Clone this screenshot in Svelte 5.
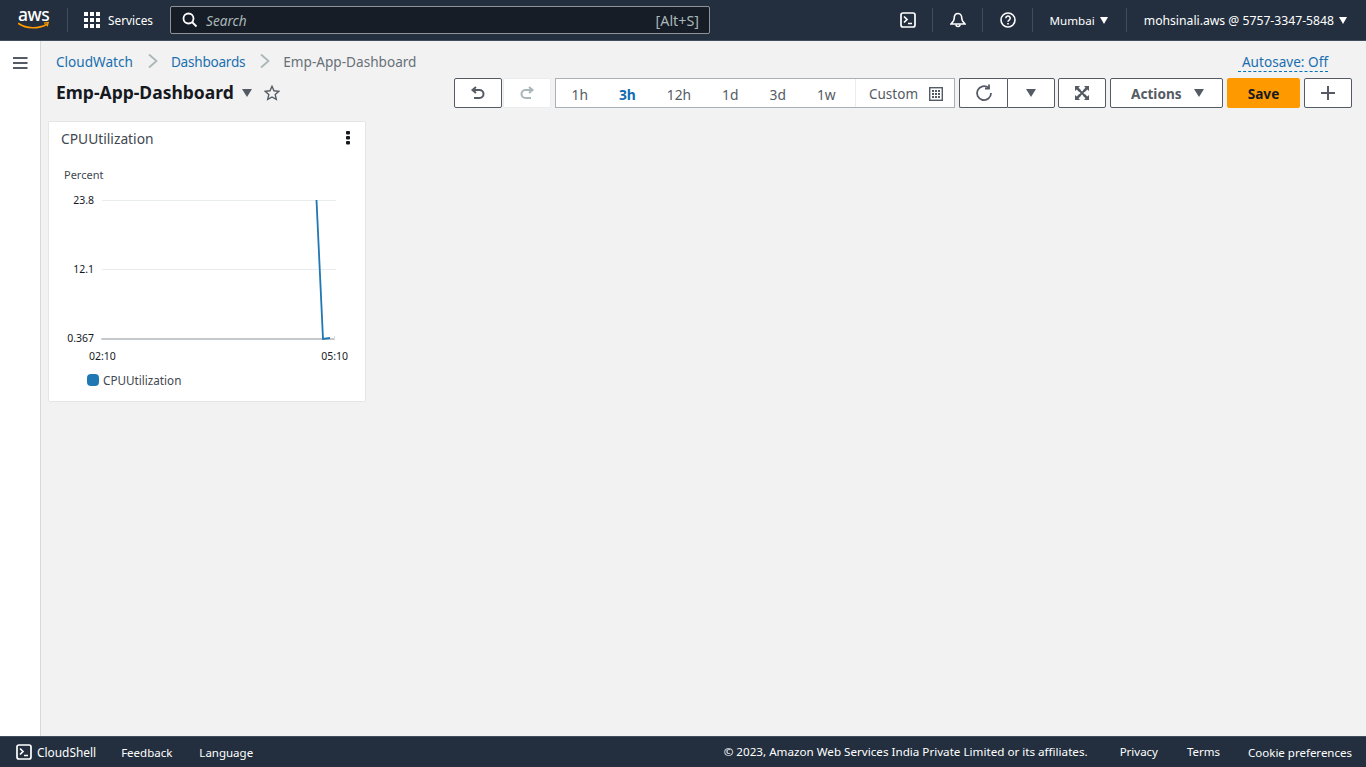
<script>
  const ranges = [['1h',false],['3h',true],['12h',false],['1d',false],['3d',false],['1w',false]];
</script>

<div class="page">
  <header class="top">
    <svg class="logo" viewBox="0 -4 38 30" width="38" height="30">
      <text x="0" y="12" class="logotext">aws</text>
      <path d="M0.500 14.500c8 5.500 20 5.500 28 1" fill="none" stroke="#ff9900" stroke-width="1.600" stroke-linecap="round"/>
      <path d="M26 14.100l4.200 -0.500l-1 3.800" fill="none" stroke="#ff9900" stroke-width="1.300"/>
    </svg>
    <span class="vsep first"></span>
    <svg class="grid" width="16" height="16" viewBox="0 0 16 16" fill="#fff">
      <rect x="0" y="0" width="4" height="4"/><rect x="6" y="0" width="4" height="4"/><rect x="12" y="0" width="4" height="4"/>
      <rect x="0" y="6" width="4" height="4"/><rect x="6" y="6" width="4" height="4"/><rect x="12" y="6" width="4" height="4"/>
      <rect x="0" y="12" width="4" height="4"/><rect x="6" y="12" width="4" height="4"/><rect x="12" y="12" width="4" height="4"/>
    </svg>
    <span class="services">Services</span>
    <div class="search">
      <svg width="16" height="16" viewBox="0 0 16 16" fill="none" stroke="#fff" stroke-width="1.800"><circle cx="6.500" cy="6.500" r="5"/><path d="M10 10L14.500 14.500"/></svg>
      <span class="placeholder">Search</span>
      <span class="hint">[Alt+S]</span>
    </div>
    <div class="right">
      <svg class="ico" width="16" height="16" viewBox="0 0 16 16" fill="none" stroke="#fff" stroke-width="1.700"><rect x="1" y="1" width="14" height="14" rx="2"/><path d="M4 4.500L7 7.500L4 10.500M8 11.500h4"/></svg>
      <span class="vsep s1"></span>
      <svg class="ico" width="16" height="16" viewBox="0 0 16 16" fill="none" stroke="#fff" stroke-width="1.600"><path d="M8 1.500c-2.800 0-3.800 2.500-3.800 5c0 2.500-1.700 3.800-3.200 5.500h14c-1.500-1.700-3.200-3-3.200-5.500c0-2.500-1-5-3.800-5z"/><path d="M6 12.500a2 2 0 0 0 4 0"/></svg>
      <span class="vsep s1"></span>
      <svg class="ico" width="16" height="16" viewBox="0 0 16 16" fill="none" stroke="#fff" stroke-width="1.600"><circle cx="8" cy="8" r="7"/><path d="M5.800 6.200a2.200 2.200 0 1 1 3.300 1.900c-.7.400-1.100.8-1.100 1.700"/><path d="M8 11v1.500"/></svg>
      <span class="vsep s1"></span>
      <span class="region">Mumbai</span><span class="caret"></span>
      <span class="vsep s2"></span>
      <span class="account">mohsinali.aws @ 5757-3347-5848</span><span class="caret"></span>
    </div>
  </header>

  <div class="body">
    <aside class="side">
      <svg width="16" height="14" viewBox="0 0 16 14" fill="#545b64"><rect y="1" width="14.500" height="2"/><rect y="6" width="14.500" height="2"/><rect y="11" width="14.500" height="2"/></svg>
    </aside>
    <main class="main">
      <div class="crumbrow">
        <nav class="crumbs">
          <a href="#a">CloudWatch</a>
          <svg width="12" height="16" viewBox="0 0 12 16" fill="none" stroke="#aab7b8" stroke-width="1.800"><path d="M2 1.500L9.500 8L2 14.500"/></svg>
          <a class="dash" href="#b">Dashboards</a>
          <svg width="12" height="16" viewBox="0 0 12 16" fill="none" stroke="#aab7b8" stroke-width="1.800"><path d="M2 1.500L9.500 8L2 14.500"/></svg>
          <span class="cur">Emp-App-Dashboard</span>
        </nav>
        <span class="autosave">Autosave: Off</span>
      </div>
      <div class="titlerow">
        <h1>Emp-App-Dashboard</h1>
        <span class="tcaret"></span>
        <svg class="star" width="16" height="16" viewBox="0 0 16 16" fill="none" stroke="#545b64" stroke-width="1.400"><path d="M8 1.300l2 4.500 4.900.5-3.700 3.300 1.100 4.800L8 12l-4.300 2.400 1.100-4.800L1.100 6.300 6 5.800z"/></svg>
        <div class="tools">
          <button class="btn w48">
            <svg width="16" height="16" viewBox="0 0 16 16" fill="none" stroke="#545b64" stroke-width="2"><path d="M6 2L2.500 5L6 8"/><path d="M3 5h6.500a3.500 3.500 0 0 1 0 8H4"/></svg>
          </button>
          <button class="btn w48 off">
            <svg width="16" height="16" viewBox="0 0 16 16" fill="none" stroke="#aab7b8" stroke-width="2"><path d="M10 2l3.500 3L10 8"/><path d="M13 5H6.500a3.500 3.500 0 0 0 0 8H12"/></svg>
          </button>
          <div class="ranges">
            {#each ranges as [label, active]}
              <span class="range" class:active>{label}</span>
            {/each}
            <span class="custom">Custom
              <svg width="14" height="14" viewBox="0 0 14 14"><rect x=".7" y=".7" width="12.600" height="12.600" fill="none" stroke="#545b64" stroke-width="1.400"/><path d="M3 3h2v2H3zM6 3h2v2H6zM9 3h2v2H9zM3 6h2v2H3zM6 6h2v2H6zM9 6h2v2H9zM3 9h2v2H3zM6 9h2v2H6zM9 9h2v2H9z" fill="#545b64"/></svg>
            </span>
          </div>
          <div class="joined">
            <button class="btn w48 jl">
              <svg width="18" height="18" viewBox="0 0 18 18" fill="none" stroke="#545b64" stroke-width="1.800"><path d="M13.500 3.800A7 7 0 1 0 16 9"/><path d="M14 0.500V4.500H10" /></svg>
            </button>
            <button class="btn w48 jr"><span class="bcaret"></span></button>
          </div>
          <button class="btn w48 expand">
            <svg width="16" height="16" viewBox="0 0 16 16"><path d="M1 1h5L4.500 2.800L7 5.200L5.200 7L2.800 4.500L1 6zM15 1v5L13.200 4.500L10.800 7L9 5.200L11.500 2.800L10 1zM1 15v-5l1.800 1.500L5.200 9L7 10.800L4.500 13.200L6 15zM15 15h-5l1.500-1.800L9 10.800L10.800 9L13.200 11.500L15 10z" fill="#545b64"/><path d="M4 4L12 12M12 4L4 12" stroke="#545b64" stroke-width="2"/></svg>
          </button>
          <button class="btn actions">Actions<span class="bcaret"></span></button>
          <button class="btn save">Save</button>
          <button class="btn w48">
            <svg width="16" height="16" viewBox="0 0 16 16" stroke="#545b64" stroke-width="2" fill="none"><path d="M8 1v14M1 8h14"/></svg>
          </button>
        </div>
      </div>
      <section class="card">
        <div class="cardhead">
          <h2>CPUUtilization</h2>
          <svg width="4" height="14" viewBox="0 0 4 14" fill="#16191f"><rect x="0" y="0" width="4" height="3.500" rx="1"/><rect x="0" y="5" width="4" height="3.500" rx="1"/><rect x="0" y="10" width="4" height="3.500" rx="1"/></svg>
        </div>
        <svg class="chart" width="316" height="240" viewBox="0 0 316 240">
          <text x="15" y="57" class="unit">Percent</text>
          <path d="M53 78.500H287M53 147.500H287" stroke="#eaeded" stroke-width="1"/>
          <path d="M52.500 218V216" stroke="#d5dbdb"/>
          <path d="M53 217H286" stroke="#c6c9cb" stroke-width="2"/>
          <path d="M285.500 214v4" stroke="#d5dbdb"/>
          <path d="M267.500 78L274 217L281 216" stroke="#1f77b4" stroke-width="1.800" fill="none"/>
          <text x="45" y="82" class="tick" text-anchor="end">23.8</text>
          <text x="45" y="151" class="tick" text-anchor="end">12.1</text>
          <text x="45" y="220" class="tick" text-anchor="end">0.367</text>
        </svg>
        <div class="xaxis"><span>02:10</span><span>05:10</span></div>
        <div class="legend"><span class="swatch"></span>CPUUtilization</div>
      </section>
    </main>
  </div>

  <footer class="foot">
    <svg width="16" height="16" viewBox="0 0 16 16" fill="none" stroke="#fff" stroke-width="1.700"><rect x="1" y="1" width="14" height="14" rx="2"/><path d="M4 4.500L7 7.500L4 10.500M8 11.500h4"/></svg>
    <span class="fshell">CloudShell</span>
    <span class="ffeed">Feedback</span>
    <span class="flang">Language</span>
    <div class="fright">
      <span class="copy">© 2023, Amazon Web Services India Private Limited or its affiliates.</span>
      <span class="fp">Privacy</span>
      <span class="fp2">Terms</span>
      <span class="fp3">Cookie preferences</span>
    </div>
  </footer>
</div>

<style>
  :global(body) { margin: 0; }
  .page {
    width: 1366px; height: 767px; display: flex; flex-direction: column; overflow: hidden;
    font-family: "Noto Sans", "Open Sans", sans-serif; color: #16191f; background: #f2f2f2;
  }
  .top {
    height: 40px; flex: none; background: #232f3e; display: flex; align-items: center;
    color: #fff; font-size: 11.800px; border-bottom: 1px solid #414d5c;
  }
  .logo { margin-left: 18px; flex: none; }
  .logotext { font: 500 17.500px "Noto Sans", sans-serif; fill: #fff; letter-spacing: -0.500px; }
  .vsep { width: 1px; height: 24px; background: #414d5c; flex: none; }
  .vsep.first { margin-left: 11px; }
  .grid { margin-left: 16px; }
  .services { margin-left: 8px; }
  .search {
    margin-left: 17px; width: 540px; height: 28px; box-sizing: border-box; flex: none;
    display: flex; align-items: center; background: #161d26; border: 1px solid #8d9499; border-radius: 2px;
    padding: 0 10px 0 11px;
  }
  .placeholder { margin-left: 8px; font-style: italic; font-size: 13.600px; color: #aab7b8; }
  .hint { margin-left: auto; font-size: 14.300px; color: #aab7b8; }
  .right { margin-left: auto; display: flex; align-items: center; padding-right: 19px; }
  .s1 { margin: 0 17px 0 16px; }
  .s2 { margin: 0 17px 0 18px; }
  .region { white-space: nowrap; font-size: 11.600px; }
  .account { white-space: nowrap; font-size: 12.200px; }
  .caret {
    margin-left: 5px; width: 0; height: 0; border-left: 4.500px solid transparent; border-right: 4.500px solid transparent;
    border-top: 7px solid #fff;
  }
  .body { flex: 1; display: flex; min-height: 0; }
  .side {
    flex: none; background: #fff; border-right: 1px solid #d5dbdb; padding: 15px 0 0 13px; width: 27px;
  }
  .side svg { display: block; }
  .main { flex: 1; padding: 0 14px 0 7px; min-width: 0; }
  .crumbrow { display: flex; align-items: center; height: 37px; box-sizing: border-box; padding: 3px 24px 0 8px; }
  .crumbs { display: flex; align-items: center; font-size: 13.600px; white-space: nowrap; }
  .crumbs a { color: #1a6fb0; text-decoration: none; }
  .crumbs .dash { letter-spacing: -0.250px; }
  .crumbs svg { margin: 0 12px 0 14px; }
  .cur { color: #687078; }
  .autosave {
    margin-left: auto; color: #1a6fb0; font-size: 13.600px; border-bottom: 1px dashed #0073bb; line-height: 19px;
    padding-left: 4px; margin-top: 1px;
  }
  .titlerow { display: flex; align-items: center; height: 30px; padding-left: 8px; }
  h1 { margin: 0 0 2px; font-size: 17.500px; font-weight: 700; white-space: nowrap; color: #16191f; }
  .tcaret {
    margin-left: 8px; width: 0; height: 0; border-left: 5px solid transparent; border-right: 5px solid transparent;
    border-top: 8px solid #545b64;
  }
  .star { margin-left: 12px; }
  .tools { margin-left: auto; display: flex; align-items: stretch; height: 30px; }
  .btn {
    box-sizing: border-box; height: 30px; background: #fff; border: 1px solid #545b64; border-radius: 2px;
    display: flex; align-items: center; justify-content: center; padding: 0; font-family: inherit; color: #545b64;
    font-size: 13.600px; font-weight: 700;
  }
  .w48 { width: 48px; }
  .tools > * + * { margin-left: 4px; }
  .tools > .off { margin-left: 1px; border-color: #eaeded; }
  .tools > .expand { margin-left: 3px; }
  .ranges {
    width: 400px; box-sizing: border-box; height: 30px; background: #fff; border: 1px solid #aab0b5; display: flex;
    align-items: center; color: #545b64; font-size: 13.800px; padding-top: 2px;
  }
  .range { padding: 0 15.500px; flex: none; }
  .range.active { color: #0f6cb0; font-weight: 700; }
  .custom {
    margin-left: auto; height: 28px; margin-top: -2px; width: 99px; box-sizing: border-box; border-left: 1px solid #eaeded;
    display: flex; align-items: center; padding: 2px 0 0 13px; gap: 11px; font-size: 13.500px;
  }
  .custom svg { flex: none; }
  .joined { display: flex; }
  .jl { border-radius: 2px 0 0 2px; border-right: 0; }
  .jr { border-radius: 0 2px 2px 0; }
  .bcaret {
    width: 0; height: 0; border-left: 5px solid transparent; border-right: 5px solid transparent; border-top: 8px solid #545b64;
  }
  .actions { width: 113px; gap: 12px; justify-content: flex-start; padding-left: 20px; }
  .save { width: 73px; background: #ff9900; border-color: #ff9900; color: #16191f; }
  .card {
    width: 316px; height: 279px; margin-top: 14px; background: #fff; box-shadow: 0 0 1px rgba(0,0,0,.3);
    position: relative; margin-left: 1px;
  }
  .cardhead { display: flex; justify-content: space-between; padding: 7px 15px 0 12px; height: 30px; box-sizing: border-box; }
  .cardhead svg { margin-top: 2px; }
  h2 { margin: 0; font-size: 13.800px; font-weight: 400; color: #414750; line-height: 19px; }
  .chart { display: block; position: absolute; left: 0; top: 0; }
  .unit { font-size: 11px; fill: #414750; }
  .tick { font-size: 10.500px; fill: #16191f; }
  .xaxis { position: absolute; top: 227px; left: 40px; right: 17px; display: flex; justify-content: space-between; font-size: 10.500px; }
  .legend { position: absolute; top: 250px; left: 38px; display: flex; align-items: center; font-size: 11.700px; color: #414750; gap: 4px; }
  .swatch { width: 12px; height: 12px; border-radius: 4px; background: #1f77b4; }
  .foot {
    flex: none; background: #232f3e; color: #fff; font-size: 11.500px; display: flex; align-items: center;
    padding-left: 16px; border-top: 1px solid #414d5c; height: 30px;
  }
  .fshell { margin-left: 5px; font-size: 11.900px; }
  .ffeed { margin-left: 25px; }
  .flang { margin-left: 27px; }
  .fright { margin-left: auto; display: flex; padding-right: 14px; }
  .copy { font-size: 11.650px; }
  .fp { margin-left: 32px; }
  .fp2 { margin-left: 29px; }
  .fp3 { margin-left: 28px; padding-top: 1px; }
</style>
